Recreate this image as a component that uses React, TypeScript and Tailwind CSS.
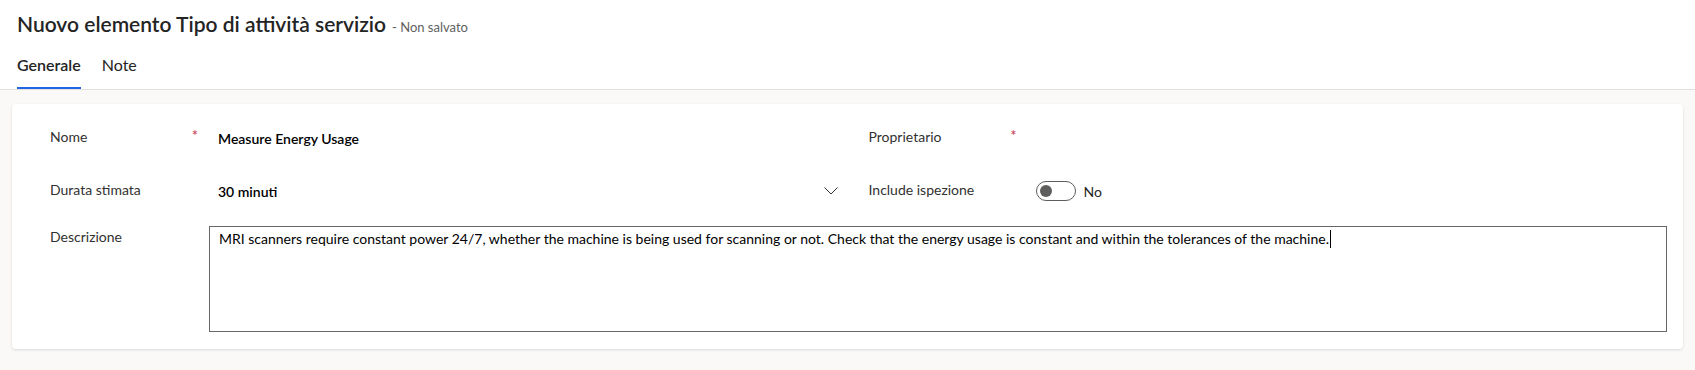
import React from "react";

function Required() {
  return <span className="ml-auto mr-[11px] mb-[2px] text-[15px] leading-none text-[#c4314b]">*</span>;
}

function Chevron() {
  return (
    <svg width="14" height="8" viewBox="0 0 14 8" fill="none" className="text-[#323130]">
      <path d="M0.5 0.5 L7 7 L13.5 0.5" stroke="currentColor" strokeWidth="1" />
    </svg>
  );
}

function Toggle({ on }: { on: boolean }) {
  return (
    <div className="flex h-[20px] w-[40px] items-center rounded-full border border-[#605e5c] bg-white px-[3px]">
      <div className={"h-[12px] w-[12px] rounded-full bg-[#605e5c]" + (on ? " ml-auto" : "")} />
    </div>
  );
}

export default function App() {
  const description =
    "MRI scanners require constant power 24/7, whether the machine is being used for scanning or not. Check that the energy usage is constant and within the tolerances of the machine.";

  return (
    <div className="min-h-[370px] w-full bg-[#faf9f8] font-['Lato',sans-serif] text-[#323130]">
      {/* header */}
      <div className="border-b border-[#e0e0e0] bg-white px-[17px]">
        <div className="flex items-baseline pt-[10px]">
          <h1 className="text-[21px] leading-[28px] font-semibold text-[#242424]">
            Nuovo elemento Tipo di attività servizio
          </h1>
          <span className="ml-[6px] text-[13px] text-[#616161]">- Non salvato</span>
        </div>
        <div className="flex gap-[21px]">
          <div className="flex flex-col pt-[16px]">
            <span className="text-[16px] leading-[22px] font-semibold text-[#242424]">Generale</span>
            <div className="mt-[11px] h-[2px] bg-[#2266e3]" />
          </div>
          <div className="flex flex-col pt-[16px]">
            <span className="text-[16px] leading-[22px] text-[#242424]">Note</span>
            <div className="mt-[11px] h-[2px]" />
          </div>
        </div>
      </div>

      {/* form card */}
      <div className="mx-[12px] mt-[14px] rounded-[4px] bg-white pt-[14px] pb-[17px] pl-[38px] pr-[16px] shadow-[0_1px_3px_rgba(0,0,0,0.12)]">
        <div className="grid h-[40px] grid-cols-2 gap-x-[20px]">
          <div className="flex items-center">
            <div className="flex w-[159px] items-center pb-[3px] text-[14px]">
              <span>Nome</span>
              <Required />
            </div>
            <span className="pl-[9px] text-[14px] font-semibold text-black">Measure Energy Usage</span>
          </div>
          <div className="flex items-center">
            <div className="flex w-[159px] items-center pb-[3px] text-[14px]">
              <span>Proprietario</span>
              <Required />
            </div>
          </div>
        </div>

        <div className="mt-[13px] grid h-[40px] grid-cols-2 gap-x-[20px]">
          <div className="flex items-center">
            <div className="w-[159px] pb-[3px] text-[14px]">Durata stimata</div>
            <div className="flex flex-1 items-center pl-[9px] pr-[11px]">
              <span className="text-[14px] font-semibold text-black">30 minuti</span>
              <span className="ml-auto">
                <Chevron />
              </span>
            </div>
          </div>
          <div className="flex items-center">
            <div className="w-[159px] pb-[3px] text-[14px]">Include ispezione</div>
            <div className="flex items-center gap-[8px] pl-[8px]">
              <Toggle on={false} />
              <span className="text-[14px] text-[#242424]">No</span>
            </div>
          </div>
        </div>

        <div className="mt-[15px] flex h-[106px]">
          <div className="w-[159px] pt-[1px] text-[14px] leading-[20px]">Descrizione</div>
          <div className="flex-1 border border-[#666666] px-[9px] pt-[2px] text-[14px] leading-[20px] text-black">
            {description}
            <span className="ml-[1px] inline-block h-[18px] w-[1px] bg-black align-[-4px]" />
          </div>
        </div>
      </div>
    </div>
  );
}
